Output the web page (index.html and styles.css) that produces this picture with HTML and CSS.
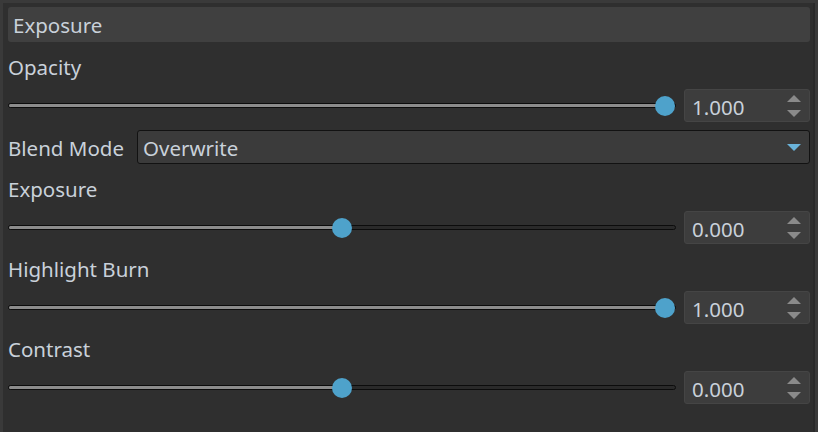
FILE: index.html
```html
<!DOCTYPE html>
<html>
<head>
<meta charset="utf-8">
<link rel="stylesheet" href="styles.css">
</head>
<body>
<div class="panel">
  <div class="header">Exposure</div>

  <div class="label">Opacity</div>
  <div class="slider-row">
    <div class="slider">
      <div class="groove"><div class="fill" style="width: calc((100% - 22px) * 1 + 11px)"></div></div>
      <div class="handle" style="left: calc((100% - 22px) * 1 + 1px)"></div>
    </div>
    <div class="spin">
      <span class="value">1.000</span>
      <svg class="arrows" width="14" height="22" viewBox="0 0 14 22"><polygon points="7,0 14,7 0,7"/><polygon points="0,15 14,15 7,22"/></svg>
    </div>
  </div>

  <div class="blend-row">
    <div class="blend-label">Blend Mode</div>
    <div class="combo">
      <span>Overwrite</span>
      <svg class="drop" width="14" height="7" viewBox="0 0 14 7"><polygon points="0,0 14,0 7,7"/></svg>
    </div>
  </div>

  <div class="label">Exposure</div>
  <div class="slider-row">
    <div class="slider">
      <div class="groove"><div class="fill" style="width: calc((100% - 22px) * 0.5 + 11px)"></div></div>
      <div class="handle" style="left: calc((100% - 22px) * 0.5 + 1px)"></div>
    </div>
    <div class="spin">
      <span class="value">0.000</span>
      <svg class="arrows" width="14" height="22" viewBox="0 0 14 22"><polygon points="7,0 14,7 0,7"/><polygon points="0,15 14,15 7,22"/></svg>
    </div>
  </div>

  <div class="label">Highlight Burn</div>
  <div class="slider-row">
    <div class="slider">
      <div class="groove"><div class="fill" style="width: calc((100% - 22px) * 1 + 11px)"></div></div>
      <div class="handle" style="left: calc((100% - 22px) * 1 + 1px)"></div>
    </div>
    <div class="spin">
      <span class="value">1.000</span>
      <svg class="arrows" width="14" height="22" viewBox="0 0 14 22"><polygon points="7,0 14,7 0,7"/><polygon points="0,15 14,15 7,22"/></svg>
    </div>
  </div>

  <div class="label">Contrast</div>
  <div class="slider-row">
    <div class="slider">
      <div class="groove"><div class="fill" style="width: calc((100% - 22px) * 0.5 + 11px)"></div></div>
      <div class="handle" style="left: calc((100% - 22px) * 0.5 + 1px)"></div>
    </div>
    <div class="spin">
      <span class="value">0.000</span>
      <svg class="arrows" width="14" height="22" viewBox="0 0 14 22"><polygon points="7,0 14,7 0,7"/><polygon points="0,15 14,15 7,22"/></svg>
    </div>
  </div>
</div>
</body>
</html>
```

FILE: styles.css
```css
html, body {
  margin: 0;
  padding: 0;
}

body {
  background: #3a3a3a;
  font-family: "Noto Sans", "Open Sans", sans-serif;
  font-size: 20.5px;
  color: #c9d1da;
  overflow: hidden;
}

.panel {
  margin: 3px 0 0 3px;
  width: 812px;
  height: 429px;
  box-sizing: border-box;
  background: #2f2f2f;
  border-right: 2px solid #2a2a2a;
  padding: 4px 3px 0 5px;
  display: flex;
  flex-direction: column;
  gap: 8px;
}

.header {
  height: 35px;
  box-sizing: border-box;
  padding: 2px 0 0 5px;
  line-height: 33px;
  background: #404040;
  border-radius: 3px;
  flex-shrink: 0;
}

.label {
  height: 31px;
  box-sizing: border-box;
  padding-top: 3px;
  line-height: 28px;
  flex-shrink: 0;
}

.slider-row {
  display: flex;
  gap: 8px;
  height: 33px;
  flex-shrink: 0;
}

.slider {
  flex: 1;
  position: relative;
  display: flex;
  align-items: center;
}

.groove {
  width: 100%;
  height: 5px;
  box-sizing: border-box;
  border: 1px solid #0c0c0c;
  border-radius: 3px;
  background: #2a2a2a;
  overflow: hidden;
}

.fill {
  height: 100%;
  background: #8c8c8c;
}

.handle {
  position: absolute;
  top: 50%;
  width: 20px;
  height: 20px;
  margin-top: -10px;
  border-radius: 50%;
  background: #4ea2cb;
}

.spin {
  width: 126px;
  box-sizing: border-box;
  background: #3d3d3d;
  border: 1px solid #454545;
  border-radius: 3px;
  display: flex;
  align-items: center;
  justify-content: space-between;
  padding: 0 8px 0 7px;
}

.value {
  padding-top: 2px;
}

.arrows polygon {
  fill: #8a8a8a;
}

.blend-row {
  display: flex;
  gap: 8px;
  height: 34px;
  align-items: stretch;
  flex-shrink: 0;
}

.blend-label {
  width: 121px;
  box-sizing: border-box;
  padding-top: 2px;
  line-height: 32px;
}

.combo {
  flex: 1;
  box-sizing: border-box;
  border: 1px solid #121212;
  border-radius: 3px;
  background: #3b3b3b;
  display: flex;
  align-items: center;
  justify-content: space-between;
  padding: 0 8px 0 5px;
}

.combo span {
  padding-top: 2px;
}

.drop polygon {
  fill: #6ab3da;
}
```
